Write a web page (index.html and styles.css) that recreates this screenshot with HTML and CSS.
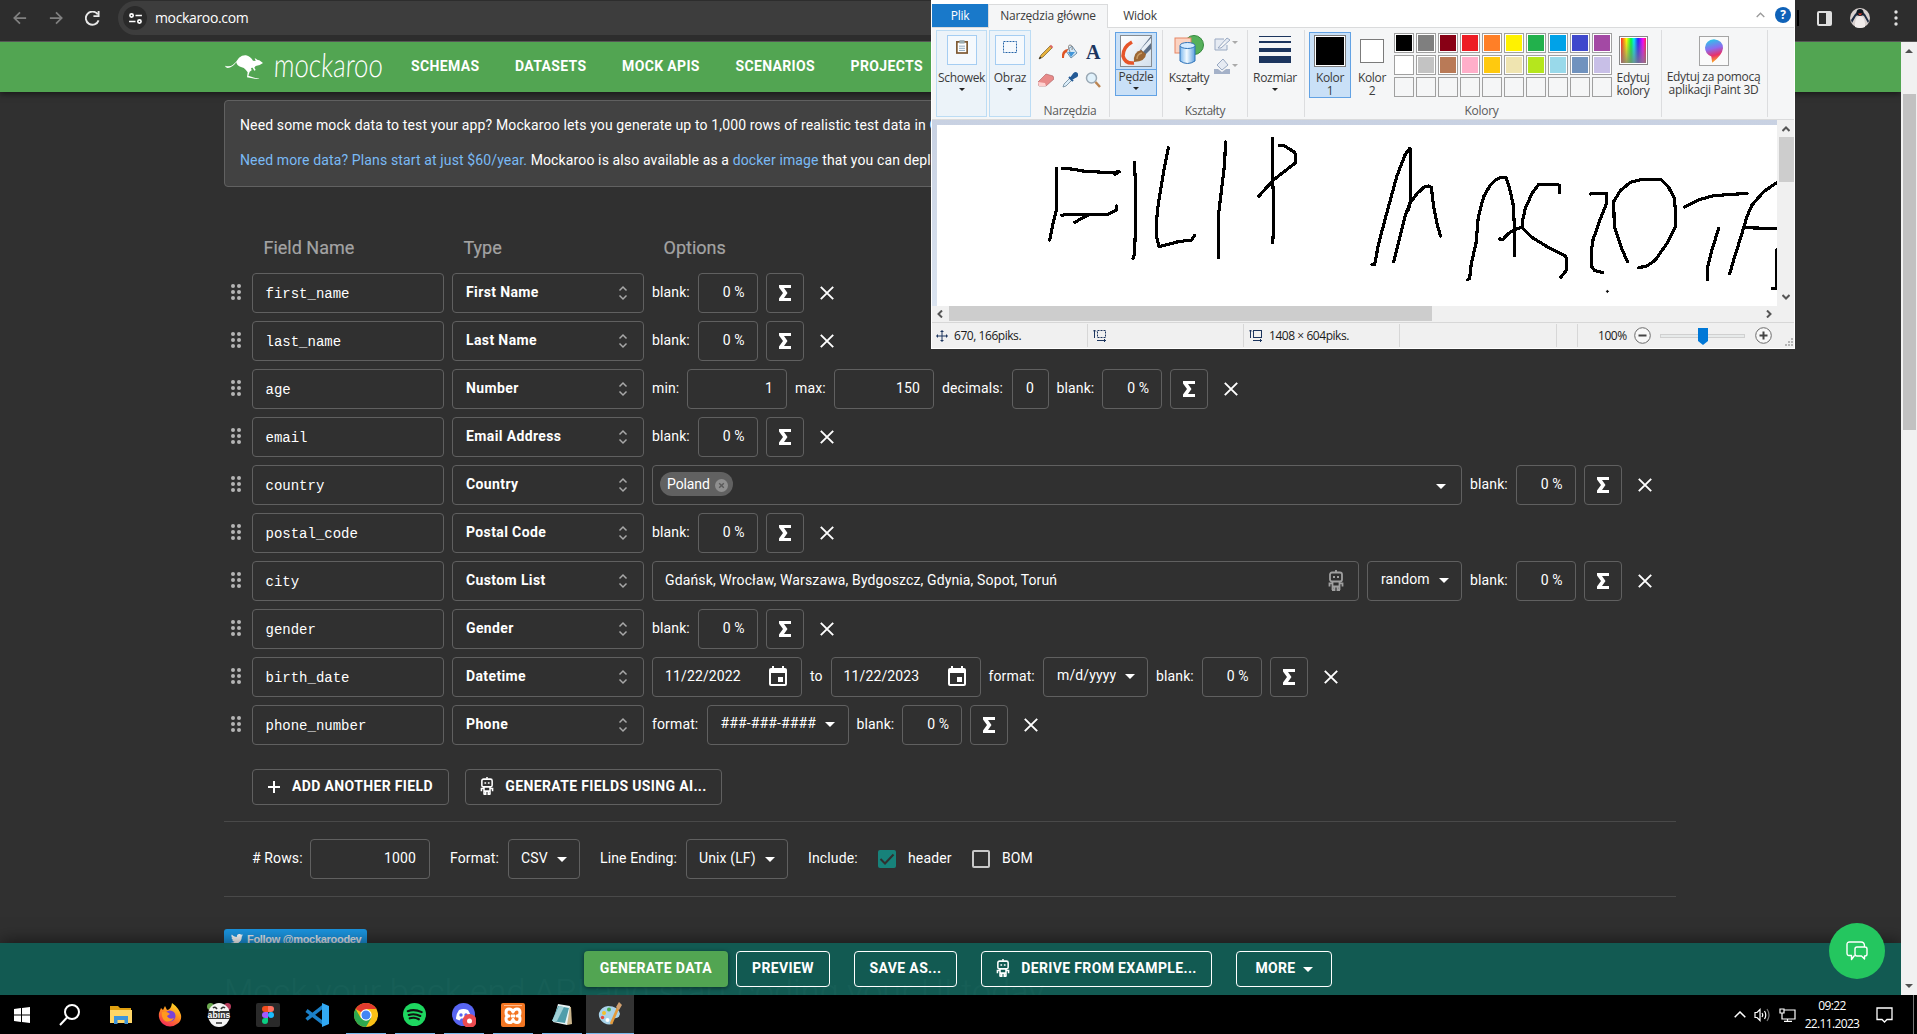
FILE: index.html
```html
<!DOCTYPE html>
<html lang="pl">
<head>
<meta charset="utf-8">
<title>Mockaroo</title>
<link rel="stylesheet" href="styles.css">
</head>
<body>
<svg class="defs" width="0" height="0">
  <symbol id="drag" viewBox="0 0 12 18"><g fill="#b5b5b5"><circle cx="3" cy="3" r="2"/><circle cx="9" cy="3" r="2"/><circle cx="3" cy="9" r="2"/><circle cx="9" cy="9" r="2"/><circle cx="3" cy="15" r="2"/><circle cx="9" cy="15" r="2"/></g></symbol>
  <symbol id="updown" viewBox="0 0 10 16"><path d="M1.5 5.5 5 2l3.500 3.500M1.500 10.500 5 14l3.500-3.500" fill="none" stroke="#a8a8a8" stroke-width="1.500"/></symbol>
  <symbol id="sigma" viewBox="0 0 12 16"><path d="M0 0H12V3H5L8.500 8 5 13H12V16H0V13.500L4 8 0 2.500Z" fill="#fff"/></symbol>
  <symbol id="close" viewBox="0 0 14 14"><path d="M.8.8 13.200 13.200M13.200.8.8 13.200" stroke="#fff" stroke-width="1.900"/></symbol>
  <symbol id="caret" viewBox="0 0 10 5"><path d="M0 0H10L5 5Z" fill="currentColor"/></symbol>
  <symbol id="cal" viewBox="0 0 18 20"><path fill-rule="evenodd" fill="#fff" d="M3 0H5V2H13V0H15V2H16Q18 2 18 4V18Q18 20 16 20H2Q0 20 0 18V4Q0 2 2 2H3ZM2 7V18H16V7ZM9 11H14V16H9Z"/></symbol>
  <symbol id="robot" viewBox="0 0 16 21"><g fill="none" stroke="currentColor" stroke-width="1.800"><rect x="2" y="2.500" width="12" height="9" rx="2"/><path d="M8 0V2M4.500 11.500V20M11.500 11.500V20M4.500 16.500H11.500M4 13.300H1.500V16.500M12 13.300H14.500V16.500M4 20H6.500V17M12 20H9.500V17"/></g><path d="M5 6H7V8H5ZM9 6H11V8H9Z" fill="currentColor"/></symbol>
</svg>
<div class="screen">
  <header class="browser">
    <svg class="nav-ic" viewBox="0 0 16 16" width="14" height="14"><path d="M15 8H2M8 1.500 1.500 8 8 14.500" fill="none" stroke="#808080" stroke-width="2"/></svg>
    <svg class="nav-ic" viewBox="0 0 16 16" width="14" height="14"><path d="M1 8H14M8 1.500 14.500 8 8 14.500" fill="none" stroke="#808080" stroke-width="2"/></svg>
    <svg class="nav-ic" viewBox="0 0 16 16" width="15" height="15"><path d="M13.500 3.500A7 7 0 1 0 14.500 10M14.500 0V5.500H9" fill="none" stroke="#e8e8e8" stroke-width="2"/></svg>
    <div class="omnibox">
      <span class="site"><svg viewBox="0 0 14 12" width="13" height="11"><g fill="none" stroke="#fff" stroke-width="1.800"><circle cx="2.700" cy="2.700" r="1.800"/><path d="M7 2.700H14M0 9.300H7"/><circle cx="11.300" cy="9.300" r="1.800"/></g></svg></span>
      <span class="url">mockaroo.com</span>
    </div>
    <div class="browser-right">
      <i class="sep"></i>
      <svg viewBox="0 0 15 15" width="15" height="15"><rect x="1" y="1" width="13" height="13" rx="1" fill="none" stroke="#e0e0e0" stroke-width="2"/><path d="M9 1H14V14H9Z" fill="#e0e0e0"/></svg>
      <svg class="avatar" viewBox="0 0 20 20" width="20" height="20"><circle cx="10" cy="10" r="10" fill="#d8cfcd"/><path d="M2 15 6 8 10 6 14 8 18 15 19 13 15 6 12 3H8L5 6 1 12Z" fill="#1c2a40"/><path d="M5 15Q6 8 10 8T15 15V19Q10 21 5 19Z" fill="#f0ebea"/><circle cx="10" cy="4.500" r="3.500" fill="#101820"/><path d="M8 5.500H12.500L10 7.500Z" fill="#e13c2c"/></svg>
      <svg viewBox="0 0 4 16" width="4" height="16"><g fill="#e0e0e0"><circle cx="2" cy="2" r="1.700"/><circle cx="2" cy="8" r="1.700"/><circle cx="2" cy="14" r="1.700"/></g></svg>
    </div>
  </header>

  <div class="viewport">
    <div class="page">
      <nav class="topnav">
        <svg class="roo" viewBox="0 0 114 72" width="38" height="24"><path fill="#fff" d="M0 32Q14 37 24 29T42 8Q52 0 63 1Q77 5 84 17L92 18 89 9 98 15 103 16 114 24 104 30 92 33 88 38 92 45 88 47 83 38 78 39 80 46 74 50 70 62 88 68 103 71 101 73 82 70 66 67 68 52 62 44Q58 38 48 36Q36 33 34 22Q22 38 8 39Q1 37 0 32Z"/></svg>
        <span class="brand">mockaroo</span>
        <div class="links"><a>SCHEMAS</a><a>DATASETS</a><a>MOCK APIS</a><a>SCENARIOS</a><a>PROJECTS</a></div>
      </nav>
      <main class="content">
        <section class="info">
          <p>Need some mock data to test your app? Mockaroo lets you generate up to 1,000 rows of realistic test data in CSV, JSON, SQL, and Excel formats.</p>
          <p><a>Need more data? Plans start at just $60/year.</a> Mockaroo is also available as a <a>docker image</a> that you can deploy in your own private cloud.</p>
        </section>
        <div class="heads"><span>Field Name</span><span>Type</span><span>Options</span></div>
        <div class="rows">
          <div class="row"><svg class="drag"><use href="#drag"/></svg><div class="box name">first_name</div><div class="box type">First Name<svg><use href="#updown"/></svg></div><label class="lb">blank:</label><div class="box pct">0 %</div><div class="box sig"><svg><use href="#sigma"/></svg></div><svg class="x"><use href="#close"/></svg></div>
          <div class="row"><svg class="drag"><use href="#drag"/></svg><div class="box name">last_name</div><div class="box type">Last Name<svg><use href="#updown"/></svg></div><label class="lb">blank:</label><div class="box pct">0 %</div><div class="box sig"><svg><use href="#sigma"/></svg></div><svg class="x"><use href="#close"/></svg></div>
          <div class="row"><svg class="drag"><use href="#drag"/></svg><div class="box name">age</div><div class="box type">Number<svg><use href="#updown"/></svg></div><label class="min">min:</label><div class="box num">1</div><label class="max">max:</label><div class="box num">150</div><label class="dec">decimals:</label><div class="box dig">0</div><label class="lb">blank:</label><div class="box pct">0 %</div><div class="box sig"><svg><use href="#sigma"/></svg></div><svg class="x"><use href="#close"/></svg></div>
          <div class="row"><svg class="drag"><use href="#drag"/></svg><div class="box name">email</div><div class="box type">Email Address<svg><use href="#updown"/></svg></div><label class="lb">blank:</label><div class="box pct">0 %</div><div class="box sig"><svg><use href="#sigma"/></svg></div><svg class="x"><use href="#close"/></svg></div>
          <div class="row"><svg class="drag"><use href="#drag"/></svg><div class="box name">country</div><div class="box type">Country<svg><use href="#updown"/></svg></div><div class="box country"><span class="chip">Poland<svg viewBox="0 0 14 14" width="13" height="13"><circle cx="7" cy="7" r="7" fill="#8f8f8f"/><path d="M4.500 4.500 9.500 9.500M9.500 4.500 4.500 9.500" stroke="#5a5a5a" stroke-width="1.500"/></svg></span><svg class="caret"><use href="#caret"/></svg></div><label class="lb">blank:</label><div class="box pct">0 %</div><div class="box sig"><svg><use href="#sigma"/></svg></div><svg class="x"><use href="#close"/></svg></div>
          <div class="row"><svg class="drag"><use href="#drag"/></svg><div class="box name">postal_code</div><div class="box type">Postal Code<svg><use href="#updown"/></svg></div><label class="lb">blank:</label><div class="box pct">0 %</div><div class="box sig"><svg><use href="#sigma"/></svg></div><svg class="x"><use href="#close"/></svg></div>
          <div class="row"><svg class="drag"><use href="#drag"/></svg><div class="box name">city</div><div class="box type">Custom List<svg><use href="#updown"/></svg></div><div class="box city">Gdańsk, Wrocław, Warszawa, Bydgoszcz, Gdynia, Sopot, Toruń<svg class="bot"><use href="#robot"/></svg></div><div class="box sel random">random<svg class="caret"><use href="#caret"/></svg></div><label class="lb">blank:</label><div class="box pct">0 %</div><div class="box sig"><svg><use href="#sigma"/></svg></div><svg class="x"><use href="#close"/></svg></div>
          <div class="row"><svg class="drag"><use href="#drag"/></svg><div class="box name">gender</div><div class="box type">Gender<svg><use href="#updown"/></svg></div><label class="lb">blank:</label><div class="box pct">0 %</div><div class="box sig"><svg><use href="#sigma"/></svg></div><svg class="x"><use href="#close"/></svg></div>
          <div class="row"><svg class="drag"><use href="#drag"/></svg><div class="box name">birth_date</div><div class="box type">Datetime<svg><use href="#updown"/></svg></div><div class="box date">11/22/2022<svg><use href="#cal"/></svg></div><label class="to">to</label><div class="box date">11/22/2023<svg><use href="#cal"/></svg></div><label class="fmt">format:</label><div class="box sel mdy">m/d/yyyy<svg class="caret"><use href="#caret"/></svg></div><label class="lb">blank:</label><div class="box pct">0 %</div><div class="box sig"><svg><use href="#sigma"/></svg></div><svg class="x"><use href="#close"/></svg></div>
          <div class="row"><svg class="drag"><use href="#drag"/></svg><div class="box name">phone_number</div><div class="box type">Phone<svg><use href="#updown"/></svg></div><label class="fmt">format:</label><div class="box sel hash">###-###-####<svg class="caret"><use href="#caret"/></svg></div><label class="lb">blank:</label><div class="box pct">0 %</div><div class="box sig"><svg><use href="#sigma"/></svg></div><svg class="x"><use href="#close"/></svg></div>
        </div>
        <div class="actions">
          <div class="btn add"><svg viewBox="0 0 12 12" width="12" height="12"><path d="M6 0V12M0 6H12" stroke="#fff" stroke-width="2"/></svg><span>ADD ANOTHER FIELD</span></div>
          <div class="btn gen"><svg class="bot2"><use href="#robot"/></svg><span>GENERATE FIELDS USING AI...</span></div>
        </div>
        <div class="settings">
          <label class="s1"># Rows:</label><div class="box nrows">1000</div>
          <label class="s2">Format:</label><div class="box sel csv">CSV<svg class="caret"><use href="#caret"/></svg></div>
          <label class="s3">Line Ending:</label><div class="box sel unix">Unix (LF)<svg class="caret"><use href="#caret"/></svg></div>
          <label class="s4">Include:</label>
          <svg class="check" viewBox="0 0 18 18" width="18" height="18"><rect width="18" height="18" rx="2" fill="#17827a"/><path d="M2.500 9 7 13.500 15.500 4.500" fill="none" stroke="#303030" stroke-width="2"/></svg><label class="s5">header</label>
          <svg class="check" viewBox="0 0 18 18" width="18" height="18"><rect x="1" y="1" width="16" height="16" rx="1" fill="none" stroke="#c8c8c8" stroke-width="2"/></svg><label>BOM</label>
        </div>
        <div class="tweet"><svg viewBox="0 0 24 20" width="12" height="10"><path fill="#fff" d="M24 2.400c-.9.400-1.800.7-2.800.8 1-.6 1.800-1.600 2.200-2.700-1 .6-2 1-3.100 1.200a4.900 4.900 0 0 0-8.400 4.500C7.800 6 4.100 4 1.700 1a4.900 4.900 0 0 0 1.500 6.600c-.8 0-1.600-.2-2.200-.6 0 2.400 1.700 4.400 3.900 4.900-.7.200-1.500.2-2.200.1.600 2 2.400 3.400 4.600 3.400A9.900 9.900 0 0 1 0 17.500 14 14 0 0 0 21.500 5c1-.7 1.800-1.600 2.500-2.600z"/></svg><span>Follow @mockaroodev</span></div>
        <h2 class="below">Mock your back end API and start coding your UI today.</h2>
      </main>
      <footer class="bar">
        <div class="btn primary">GENERATE DATA</div><div class="btn preview">PREVIEW</div><div class="btn save">SAVE AS...</div><div class="btn derive"><svg class="bot2"><use href="#robot"/></svg><span>DERIVE FROM EXAMPLE...</span></div><div class="btn more">MORE<svg class="caret"><use href="#caret"/></svg></div>
      </footer>
      <div class="chat"><svg viewBox="0 0 22 20" width="22" height="20"><g fill="none" stroke="#fff" stroke-width="1.400" stroke-linejoin="round"><path d="M8.500 14.500 5.500 18.500V14.500H3Q1 14.500 1 12V3.500Q1 1 3.500 1H15Q18.500 1 18.500 5V6M11 6H19Q21 6 21 8V13Q21 15 19 15H18.500V18L15.500 15H11Q9 15 9 13V8Q9 6 11 6Z"/></g></svg></div>
    </div>
    <div class="scrollbar"><i class="up"></i><i class="thumb"></i><i class="down"></i></div>
  </div>

  <footer class="taskbar">
    <div class="t start"><svg viewBox="0 0 16 16" width="16" height="16"><path fill="#fff" d="M0 2 7 1V7.500H0ZM8 .9 16 0V7.500H8ZM0 8.500H7V15L0 14ZM8 8.500H16V16L8 15.100Z"/></svg></div>
    <div class="t search"><svg viewBox="0 0 22 22" width="22" height="22"><circle cx="13" cy="8" r="7" fill="none" stroke="#fff" stroke-width="2"/><path d="M8 13.500 1 21" stroke="#fff" stroke-width="2"/></svg></div>
    <div class="t"><svg viewBox="0 0 24 20" width="24" height="20"><path fill="#e0a010" d="M1 1H9L11 3H22V8H1Z"/><path fill="#ffd667" d="M1 5H23V18H1Z"/><path fill="#3e95db" d="M5 19V11H19V19H15.500V15H8.500V19Z"/></svg></div>
    <div class="t"><svg viewBox="0 0 24 24" width="24" height="24"><defs><linearGradient id="ff" x1=".8" y1="0" x2=".3" y2="1"><stop offset="0" stop-color="#ffe226"/><stop offset=".5" stop-color="#ff8a1f"/><stop offset="1" stop-color="#f5285a"/></linearGradient></defs><path fill="url(#ff)" d="M14 0Q21 5 23 12Q24 18 19 21Q12 26 5 21Q0 17 1 10L3 5 5 7 7 3 9 7Q13 7 14 0Z"/><circle cx="12" cy="13" r="5.500" fill="#7a42d8"/><path fill="#ff9a1e" d="M4 9Q9 8 12 11L9 13Q11 17 16 15Q13 20 7 18Q3 15 4 9Z"/></svg></div>
    <div class="t"><svg viewBox="0 0 24 24" width="24" height="24"><circle cx="3.500" cy="3.500" r="3.500" fill="#6aa84f"/><circle cx="20.500" cy="3.500" r="3.500" fill="#b73c5c"/><ellipse cx="12" cy="12" rx="11" ry="12" fill="#f4f4f4"/><path d="M1 8H23V16H1Z" fill="#333"/><path d="M6 5Q8 3 10 6M14 6Q16 3 18 5M9 20H15" stroke="#333" stroke-width="1.600" fill="none"/><text x="12" y="14.500" text-anchor="middle" font-size="8.500" font-weight="700" font-family="Liberation Sans, sans-serif" fill="#fff">abins</text></svg></div>
    <div class="t"><svg viewBox="0 0 24 24" width="24" height="24"><rect width="24" height="24" rx="2" fill="#2a2a2a"/><path fill="#f24e1e" d="M12 3H9A3 3 0 0 0 9 9H12Z"/><path fill="#ff7262" d="M12 3H15A3 3 0 0 1 15 9H12Z"/><path fill="#a259ff" d="M12 9H9A3 3 0 0 0 9 15H12Z"/><circle cx="15" cy="12" r="3" fill="#1abcfe"/><path fill="#0acf83" d="M12 15H9A3 3 0 1 0 12 18Z"/></svg></div>
    <div class="t"><svg viewBox="0 0 24 24" width="24" height="24"><path fill="none" stroke="#1b80c8" stroke-width="3.500" d="M1.500 7.500 18 20M1.500 16.500 18 3.500"/><path fill="#32a9f3" d="M17 0 24 3V21L17 24Z"/></svg></div>
    <div class="t run"><svg viewBox="0 0 24 24" width="24" height="24"><circle cx="12" cy="12" r="12" fill="#fbc116"/><path fill="#e33b2e" d="M12 12 1.600 6A12 12 0 0 1 22.400 6H12Z"/><path fill="#2da94f" d="M12 12 6.800 15 1.600 6A12 12 0 0 0 12 24L17.200 15Z"/><circle cx="12" cy="12" r="5.700" fill="#fff"/><circle cx="12" cy="12" r="4.500" fill="#4285f4"/></svg></div>
    <div class="t run"><svg viewBox="0 0 24 24" width="23" height="23"><circle cx="12" cy="12" r="12" fill="#1ed760"/><path fill="none" stroke="#111" stroke-width="2.200" stroke-linecap="round" d="M5 8.500Q12 6 19.500 9.500M6 12.500Q12 10.500 18 13.500M7 16Q12 14.500 16.500 17"/></svg></div>
    <div class="t run"><svg viewBox="0 0 24 24" width="24" height="24"><circle cx="11.500" cy="11.500" r="11.500" fill="#5865f2"/><path fill="#fff" d="M7 7Q11.500 5 16 7Q19 11 19 16L15.500 17.500 14 15.500H9L7.500 17.500 4 16Q4 11 7 7Z"/><circle cx="9" cy="12" r="1.700" fill="#5865f2"/><circle cx="14" cy="12" r="1.700" fill="#5865f2"/><circle cx="17.500" cy="18" r="7" fill="#ed4b50"/><circle cx="17.500" cy="18" r="2.500" fill="#fff"/></svg></div>
    <div class="t run"><svg viewBox="0 0 24 24" width="24" height="24"><rect width="24" height="24" rx="2" fill="#f37623"/><path d="M3 2.500H21" stroke="#ffb98a"/><path fill="none" stroke="#fff" stroke-width="3" stroke-linejoin="round" d="M12 9Q11 6 8 6T5 9.500T8 13Q5 13 5 16T8 19.500T12 16.500Q13 19.500 16 19.500T19 16T16 13Q19 13 19 9.500T16 6T12 9ZM10 13H14"/></svg></div>
    <div class="t run"><svg viewBox="0 0 24 24" width="24" height="24"><path fill="#c9b48b" d="M8 2 21 4 22 21 17 22Z"/><path fill="#e8f4f5" d="M8 1 20 3 17 22 3 19Z"/><path fill="#4f9daa" d="M8 3 19 5 15 20 2 18Z"/><path fill="#9fd0d6" d="M9 3 14 4 7 18 2 18Z"/></svg></div>
    <div class="t active"><svg viewBox="0 0 24 24" width="24" height="24"><path fill="#a8d3ea" d="M10 4Q20 4 22 12Q21 17 16 16Q13 18 15 21Q12 24 6 21Q0 17 1 11Q3 5 10 4Z"/><circle cx="6" cy="11" r="2" fill="#f2c12e"/><circle cx="11" cy="7.500" r="2" fill="#4cae4f"/><circle cx="4.500" cy="15.500" r="1.700" fill="#e6493d"/><circle cx="9.500" cy="18" r="2" fill="#fff"/><path stroke="#e39a3b" stroke-width="2.600" d="M13 22 20 6"/><path fill="#d0a070" d="M18 5 21 0 24 3 21 8Z"/></svg></div>
    <div class="tray">
      <svg viewBox="0 0 12 7" width="12" height="7"><path d="M.7 6.300 6 1 11.300 6.300" fill="none" stroke="#fff" stroke-width="1.500"/></svg>
      <svg viewBox="0 0 17 14" width="17" height="14"><g fill="none" stroke="#fff" stroke-width="1.200"><path d="M1 4.500H3L6 1.500V12.500L3 9.500H1ZM8 5Q9.500 7 8 9M10.500 3Q13 7 10.500 11"/><path d="M13 1Q17 7 13 13" stroke="#777"/></g></svg>
      <svg viewBox="0 0 17 14" width="17" height="14"><g fill="none" stroke="#fff" stroke-width="1.200"><path d="M5 2H16V11H3V7M8.500 11V13.500M5 13.400H13M1 1H5V5H1ZM3 5V8"/></g></svg>
      <div class="clock"><span>09:22</span><span>22.11.2023</span></div>
      <svg viewBox="0 0 17 16" width="17" height="16"><path d="M1 1H16V12.500H11L8.500 15 6 12.500H1Z" fill="none" stroke="#fff" stroke-width="1.300"/></svg>
      <i class="peek"></i>
    </div>
  </footer>

  <section class="paint">
    <div class="tabs"><span class="file">Plik</span><span class="home">Narzędzia główne</span><span class="view">Widok</span>
      <svg class="chev" viewBox="0 0 9 6" width="9" height="6"><path d="M.7 5 4.500 1.200 8.300 5" fill="none" stroke="#9a9a9a" stroke-width="1.300"/></svg><span class="help">?</span></div>
    <div class="ribbon">
      <div class="grp clip"><div class="icbox"><svg viewBox="0 0 14 16" width="12" height="14"><rect x="0" y="1" width="14" height="15" fill="#7f5b35"/><rect x="2" y="3" width="10" height="11" fill="#fff"/><path d="M4 0H10V4H4Z" fill="#9bacb0"/><path d="M3.500 7H10.500M3.500 9.500H10.500M3.500 12H10.500" stroke="#7c9bb5"/></svg></div><b>Schowek</b><svg class="dn"><use href="#caret"/></svg></div>
      <div class="grp clip image"><div class="icbox"><svg viewBox="0 0 14 12" width="14" height="12"><rect x=".5" y=".5" width="13" height="11" fill="none" stroke="#2464a8" stroke-dasharray="2 1"/></svg></div><b>Obraz</b><svg class="dn"><use href="#caret"/></svg></div>
      <div class="grp tools"><div class="toolgrid">
        <svg viewBox="0 0 16 16" width="16" height="16"><path d="M1 15 3 11 12 2 14 4 5 13Z" fill="#e7b13b" stroke="#735b2c" stroke-width=".7"/><path d="M11.500 2 13 .8 15.200 3 14 4.500Z" fill="#dc6663"/><path d="M1 15 2 12.500 3.500 14Z" fill="#222"/></svg>
        <svg viewBox="0 0 16 16" width="16" height="16"><path d="M4 7 10 2 15 9 9 14Z" fill="#d3e7f5" stroke="#6d90ab"/><path d="M6 8 13 8 9 13Z" fill="#4295d8"/><path d="M0 14Q-1 6 6 5L5 8Q2 9 2 14Z" fill="#df5525"/><path d="M8 8Q5 1 8 1T10 6" fill="none" stroke="#888"/></svg>
        <span class="A">A</span>
        <svg viewBox="0 0 16 14" width="16" height="14"><path d="M0 9 8 1 15 3 16 6 8 13 1 13Z" fill="#e88a89" stroke="#a95e60" stroke-width=".6"/><path d="M0 9 7 10 8 13 1 13Z" fill="#ffd0cf"/></svg>
        <svg viewBox="0 0 16 16" width="16" height="16"><path d="M1 15 2 12 8 6 10 8 4 14Z" fill="#dceefa" stroke="#69869b" stroke-width=".8"/><path d="M7 5 11 9M9 6 12 2Q14 0 15 2T13 5L10 7Z" stroke="#255b96" stroke-width="2" fill="#255b96"/></svg>
        <svg viewBox="0 0 16 16" width="16" height="16"><circle cx="6.500" cy="6" r="5" fill="#e0f1fb" stroke="#9aa9b5" stroke-width="1.500"/><path d="M10.500 10 15 15" stroke="#bc8552" stroke-width="2.500"/></svg>
      </div><em>Narzędzia</em></div>
      <div class="grp brush"><div class="brushbtn"><svg viewBox="0 0 32 32" width="32" height="32"><defs><linearGradient id="bg" x2="1" y2="1"><stop offset="0" stop-color="#fff"/><stop offset="1" stop-color="#d3e0ec"/></linearGradient></defs><rect x=".5" y=".5" width="31" height="31" fill="url(#bg)" stroke="#858b91"/><path d="M31 1V14L25 20 20 15Z" fill="#5d7088"/><path d="M21 14 31 3V8L23 17Z" fill="#e8eff6"/><path d="M12 7Q3 12 3 21Q5 29 14 28" fill="none" stroke="#e6552a" stroke-width="3.500"/><path d="M14 27Q13 17 21 15L26 19Q26 26 14 27Z" fill="#9c6734"/><path d="M17 24Q17 19 22 18" stroke="#c99a62" fill="none" stroke-width="1.500"/></svg><b>Pędzle</b><svg class="dn"><use href="#caret"/></svg></div></div>
      <div class="grp shapes"><div class="shaperow"><div class="shape"><svg viewBox="0 0 30 30" width="30" height="30"><defs><linearGradient id="cy"><stop offset="0" stop-color="#7bb8ef"/><stop offset=".45" stop-color="#f2faff"/><stop offset="1" stop-color="#5c9fe0"/></linearGradient></defs><circle cx="20" cy="10" r="9.500" fill="#55b05b" stroke="#34893c"/><rect x="1" y="3" width="16" height="15" fill="#fbd3c2" stroke="#e88664"/><path d="M6 11V26Q13.500 31 21 26V11Z" fill="url(#cy)" stroke="#2f73b8"/><ellipse cx="13.500" cy="10.500" rx="7.500" ry="3" fill="#d4eaff" stroke="#2f73b8"/></svg><b>Kształty</b><svg class="dn"><use href="#caret"/></svg></div><div class="two"><svg viewBox="0 0 24 14" width="24" height="14"><path d="M10 2H1V13H13V8M4 11 13 1 16 3 7 11Z" fill="#e6ebf3" stroke="#99a9c2"/><path d="M18 4H24L21 7Z" fill="#aaa"/></svg><svg viewBox="0 0 24 16" width="24" height="16"><path d="M3 7 9 1 14 7 8 12Z" fill="#e6ebf3" stroke="#99a9c2"/><path d="M0 11H4L8 14 12 11H16V16H0Z" fill="#a4b1c8"/><path d="M18 6H24L21 9Z" fill="#aaa"/></svg></div></div><em>Kształty</em></div>
      <div class="grp size"><svg viewBox="0 0 32 27" width="32" height="27"><path fill="#1c355e" d="M0 0H32V1H0ZM0 5H32V7H0ZM0 12H32V16H0ZM0 20H32V27H0Z"/></svg><b>Rozmiar</b><svg class="dn"><use href="#caret"/></svg></div>
      <div class="grp colors"><div class="colorrow"><div class="c1"><i></i><b>Kolor<br>1</b></div><div class="c2"><i></i><b>Kolor<br>2</b></div>
        <div class="swatches">
          <i style="background-color:#000"></i><i style="background-color:#7f7f7f"></i><i style="background-color:#880015"></i><i style="background-color:#ed1c24"></i><i style="background-color:#ff7f27"></i><i style="background-color:#fff200"></i><i style="background-color:#22b14c"></i><i style="background-color:#00a2e8"></i><i style="background-color:#3f48cc"></i><i style="background-color:#a349a4"></i>
          <i style="background-color:#fff"></i><i style="background-color:#c3c3c3"></i><i style="background-color:#b97a57"></i><i style="background-color:#ffaec9"></i><i style="background-color:#ffc90e"></i><i style="background-color:#efe4b0"></i><i style="background-color:#b5e61d"></i><i style="background-color:#99d9ea"></i><i style="background-color:#7092be"></i><i style="background-color:#c8bfe7"></i>
          <i class="e"></i><i class="e"></i><i class="e"></i><i class="e"></i><i class="e"></i><i class="e"></i><i class="e"></i><i class="e"></i><i class="e"></i><i class="e"></i>
        </div>
        <div class="edit"><i></i><b>Edytuj<br>kolory</b></div></div><em>Kolory</em></div>
      <div class="grp p3d"><div class="p3box"><svg viewBox="0 0 20 26" width="18" height="24"><defs><linearGradient id="p3" x1=".3" y1="0" x2=".5" y2="1"><stop offset="0" stop-color="#28c8e8"/><stop offset=".4" stop-color="#8a6df0"/><stop offset=".7" stop-color="#e8306a"/><stop offset="1" stop-color="#ffb61e"/></linearGradient></defs><path fill="url(#p3)" d="M10 0Q20 1 20 10Q19 18 8 26L7 19Q0 16 0 9Q1 1 10 0Z"/></svg></div><b>Edytuj za pomocą<br>aplikacji Paint 3D</b></div>
    </div>
    <div class="work">
      <div class="stage"><div class="canvas"><svg width="840" height="180" viewBox="0 0 840 180"><g transform="translate(-12 -125) scale(.33333)" fill="none" stroke="#000" stroke-width="9.500" stroke-linecap="round" stroke-linejoin="round" shape-rendering="crispEdges"><path d="M395 505V628L382 680 374 720M413 506 440 507 480 514 560 518 583 515 570 523M410 646 430 643H548L574 631V618M449 667 489 645M628 488 631 540V700L628 765 624 776M730 443 715 520 700 610 695 660V710L702 740 760 725 800 720 809 706M902 426 898 500 881 640V772M1043 415V540L1046 600V685L1043 728M1063 436H1076L1106 455 1112 463V488L1045 540 1001 589M1341 794H1349L1360 735 1385 640 1415 530 1440 465 1454 445 1457 450V600L1450 630M1406 785 1420 730 1440 650 1454 610 1475 582 1496 562 1511 558 1519 562 1526 620 1536 670 1546 708"/><path transform="translate(1476)" d="M152 839 158 835 163 790 177 730 184 650 200 590 220 555 235 541 250 533 267 532 275 555 288 610 293 690V767M248 717 258 718 275 700 290 690 315 682M428 577V557L421 553H365L345 580 325 625 317 660V685L345 712 390 740 445 768 449 775V810L431 832M520 582 545 580H569V610L545 670 528 720 524 745V800L533 812 557 818M631 785 612 740 592 680 590 605 610 572 640 547 670 539H733L755 562 772 595 776 640V680L750 730 715 780 690 798 665 803M803 621 850 598 890 587 990 580M905 685 885 750 872 800V839M938 821 950 780 975 700 990 650 1005 615 1040 575 1085 544M982 683 1085 686M1079 750V866H1066"/><path stroke-width="3" transform="translate(1476)" d="M568 874H575M571 871V878"/></g></svg></div></div>
      <div class="vs"><svg viewBox="0 0 8 6" width="8" height="6"><path d="M.5 5 4 1.500 7.500 5" fill="none" stroke="#555" stroke-width="2"/></svg><i></i><svg viewBox="0 0 8 6" width="8" height="6"><path d="M.5 1 4 4.500 7.500 1" fill="none" stroke="#555" stroke-width="2"/></svg></div>
    </div>
    <div class="hs"><svg viewBox="0 0 6 8" width="6" height="8"><path d="M5 .5 1.500 4 5 7.500" fill="none" stroke="#555" stroke-width="2"/></svg><i></i><svg class="r" viewBox="0 0 6 8" width="6" height="8"><path d="M1 .5 4.500 4 1 7.500" fill="none" stroke="#555" stroke-width="2"/></svg></div>
    <div class="status">
      <div class="st a"><svg viewBox="0 0 12 12" width="12" height="12"><path d="M6 0V12M0 6H12M4.500 1.500H7.500M4.500 10.500H7.500M1.500 4.500V7.500M10.500 4.500V7.500" stroke="#1c355e"/></svg><span>670, 166piks.</span></div>
      <div class="st b"><svg viewBox="0 0 14 13" width="14" height="13"><g fill="none" stroke="#1c355e"><rect x="4.500" y="1.500" width="8" height="7" stroke-dasharray="2 1"/><path d="M1.500 1V9M0 2.500 1.500 1 3 2.500M4 11.500H13M11 10 12.500 11.500 11 13"/></g></svg></div>
      <div class="st c"><svg viewBox="0 0 14 13" width="14" height="13"><g fill="none" stroke="#1c355e"><rect x="4.500" y="1.500" width="8" height="7"/><path d="M1.500 1V9M0 2.500 1.500 1 3 2.500M4 11.500H13M11 10 12.500 11.500 11 13"/></g></svg><span>1408 × 604piks.</span></div>
      <div class="st d"></div><div class="st e2"></div>
      <div class="zoom"><span>100%</span><svg viewBox="0 0 17 17" width="17" height="17"><circle cx="8.500" cy="8.500" r="7.800" fill="#f8f8f8" stroke="#6b6b6b"/><path d="M4.500 8.500H12.500" stroke="#444" stroke-width="2"/></svg><div class="track"><svg viewBox="0 0 10 17" width="10" height="17"><path d="M0 0H10V13L5 17 0 13Z" fill="#0078d7"/></svg></div><svg viewBox="0 0 17 17" width="17" height="17"><circle cx="8.500" cy="8.500" r="7.800" fill="#f8f8f8" stroke="#6b6b6b"/><path d="M4.500 8.500H12.500M8.500 4.500V12.500" stroke="#444" stroke-width="2"/></svg><svg class="grip" viewBox="0 0 8 8" width="8" height="8"><path fill="#b5b5b5" d="M6 0H8V2H6ZM6 3H8V5H6ZM3 3H5V5H3ZM6 6H8V8H6ZM3 6H5V8H3ZM0 6H2V8H0Z"/></svg></div>
    </div>
  </section>
</div>
</body>
</html>
```
FILE: styles.css
```css
* { box-sizing: border-box; }
body { margin: 0; overflow: hidden; background: #303030; color: #fff; font: 14px/20px Roboto, "Liberation Sans", sans-serif; letter-spacing: .13px; }
svg { display: block; flex: none; }
.defs { position: absolute; }
.screen { position: relative; display: flex; flex-direction: column; width: 1917px; height: 1034px; }

/* browser toolbar */
.browser { display: flex; align-items: flex-start; height: 42px; background: #2d2d2d; border-bottom: 1px solid #555; padding: 1px 0 0 13px; }
.nav-ic { margin: 10px 22px 0 0; }
.omnibox { display: flex; align-items: center; width: 1600px; height: 34px; margin-left: -4px; border-radius: 17px; background: #3d3d3d; padding-left: 5px; }
.site { display: flex; align-items: center; justify-content: center; width: 24px; height: 24px; border-radius: 50%; background: #2a2a2a; }
.url { margin-left: 8px; font: 14px/20px "Open Sans", sans-serif; letter-spacing: -.35px; }
.browser-right { display: flex; align-items: center; height: 34px; margin-left: auto; padding-right: 19px; }
.browser-right .sep { width: 2px; height: 16px; background: #000; margin-right: 18px; }
.avatar { margin: 0 24px 0 18px; }

.viewport { display: flex; height: 953px; }
.page { position: relative; width: 1901px; height: 953px; overflow: hidden; background: #303030; }
.topnav { position: relative; display: flex; align-items: center; height: 50px; padding-left: 225px; background: #52a552; box-shadow: 0 2px 6px rgba(0,0,0,.5); }
.brand { width: 110px; margin-left: 11px; font: 300 33px/44px Lato, sans-serif; letter-spacing: 0; transform: scaleX(.78) skewX(-4deg); transform-origin: 0 50%; margin-top: -7px; }
.links { display: flex; gap: 35.600px; margin-left: 27px; font-weight: 700; letter-spacing: .35px; margin-top: -3px; }
.content { padding: 8px 0 0 224px; }
.info { width: 1452px; height: 87px; padding: 14px 15px; background: #424242; border: 1px solid #616161; border-radius: 4px; overflow: hidden; }
.info p { margin: 0 0 15px; white-space: nowrap; }
.info a { color: #7abaf5; }
.heads { display: flex; margin-top: 49px; padding-left: 39.500px; font-size: 18px; line-height: 24px; letter-spacing: 0; color: #a3a3a3; -webkit-text-stroke: .2px #a3a3a3; }
.heads span { width: 200px; }

/* field rows */
.rows { display: flex; flex-direction: column; gap: 8px; margin-top: 13px; }
.row { display: flex; align-items: center; gap: 8px; height: 40px; padding-left: 6px; }
.box { display: flex; align-items: center; height: 40px; border: 1px solid #606060; border-radius: 4px; padding: 0 12px 2px; white-space: nowrap; flex: none; }
label { white-space: nowrap; flex: none; padding-bottom: 2px; }
.drag { width: 12px; height: 18px; margin-right: 2px; margin-top: -2px; }
.name { width: 192px; font: 14px/20px "Liberation Mono", monospace; letter-spacing: 0; padding-left: 12.500px; padding-top: 1px; padding-bottom: 0; }
.type { width: 192px; font-weight: 700; letter-spacing: .38px; justify-content: space-between; padding-left: 13px; padding-right: 15px; }
.type svg { width: 10px; height: 16px; margin-top: 2px; }
.lb { width: 37.700px; }
.min { width: 27px; }
.max { width: 31px; }
.dec { width: 61.500px; }
.to { width: 12.500px; }
.fmt { width: 46.500px; }
.pct { width: 60px; justify-content: flex-end; }
.num { width: 100px; justify-content: flex-end; padding-right: 13px; }
.dig { width: 37px; justify-content: center; padding: 0 0 2px; }
.sig { width: 38px; justify-content: center; padding: 0 0 1px; }
.sig svg { width: 12px; height: 16px; }
.x { width: 14px; height: 14px; margin-left: 8px; margin-top: -1px; }
.caret { width: 10px; height: 5px; margin-left: 9px; margin-top: 3px; }
.country { width: 810px; padding: 0 15px 0 7px; justify-content: space-between; }
.chip { display: flex; align-items: center; width: 73px; height: 24px; padding-left: 7px; border-radius: 12px; background: #616161; line-height: 22px; letter-spacing: -.1px; margin-top: -2px; }
.chip svg { margin: 2px 0 0 5px; }
.city { width: 707px; justify-content: space-between; padding-right: 14px; }
.bot { width: 16px; height: 21px; color: #a0a0a0; }
.random { width: 95px; }
.date { width: 150px; justify-content: space-between; padding-right: 14px; }
.date svg { width: 18px; height: 20px; }
.mdy { width: 105px; }
.hash { width: 142px; }
.sel { padding-bottom: 4px; padding-left: 13px; }

.btn { display: flex; align-items: center; justify-content: center; height: 36px; border: 1px solid #606060; border-radius: 4px; font-weight: 700; letter-spacing: .36px; white-space: nowrap; flex: none; padding-bottom: 2px; }
.bot2 { width: 14px; height: 18px; margin-right: 11px; }
.actions { display: flex; gap: 16px; padding: 24px 0 16px 28px; border-bottom: 1px solid #494949; width: 1452px; }
.add { width: 197px; }
.add svg { margin-right: 12px; margin-top: 2px; }
.gen { width: 257px; }
.settings { display: flex; align-items: center; width: 1452px; height: 75px; padding-left: 28px; border-bottom: 1px solid #494949; }
.settings .sel { padding-bottom: 2px; padding-left: 12px; }
.s1 { width: 58px; }
.nrows { width: 120px; margin-right: 20px; justify-content: flex-end; padding-right: 13px; }
.s2 { width: 58px; }
.csv { width: 72px; margin-right: 20px; }
.s3 { width: 86px; }
.unix { width: 102px; margin-right: 20px; }
.s4 { width: 70px; }
.s5 { width: 64px; }
.check { margin-right: 12px; }
.tweet { display: flex; align-items: center; width: 143px; height: 20px; margin-top: 32px; padding-left: 7px; border-radius: 3px; background: #1b95e0; font: 700 11px/20px "Liberation Sans", sans-serif; color: #e6e9ec; }
.tweet span { margin-left: 4px; letter-spacing: -.3px; white-space: nowrap; }
.below { margin: 22px 0 0; font-size: 34px; line-height: 40px; font-weight: 300; color: #fff; white-space: nowrap; }
.bar { position: absolute; left: 0; bottom: 0; display: flex; width: 1901px; height: 52px; padding: 8px 0 0 584px; background: rgba(17,91,83,.98); box-shadow: 0 -2px 16px rgba(0,0,0,.5); }
.bar .btn { border-color: #fff; }
.bar .primary { width: 144px; background: #52a552; border: 0; box-shadow: 0 1px 4px rgba(0,0,0,.5); margin-right: 8px; }
.preview { width: 94px; margin-right: 24px; }
.save { width: 103px; margin-right: 24px; }
.derive { width: 231px; margin-right: 24px; }
.more { width: 96px; }
.bar .caret { margin-left: 7px; }
.chat { position: absolute; left: 1829px; top: 881px; display: flex; align-items: center; justify-content: center; width: 56px; height: 56px; border-radius: 50%; background: #24c65f; }
.scrollbar { display: flex; flex-direction: column; align-items: center; width: 16px; background: #f1f1f1; }
.scrollbar i { border: 4px solid transparent; }
.scrollbar .up { margin-top: 3px; border-bottom-color: #505050; }
.scrollbar .thumb { width: 13px; height: 336px; margin-top: 41px; background: #c1c1c1; border: 0; }
.scrollbar .down { margin-top: auto; margin-bottom: 3px; border-top-color: #505050; }

/* taskbar */
.taskbar { display: flex; height: 39px; background: #000; }
.t { display: flex; align-items: center; justify-content: center; width: 49px; height: 39px; }
.start { width: 44px; }
.search { width: 52px; }
.run { background: linear-gradient(#76b9ed,#76b9ed) center bottom / 40px 1px no-repeat; }
.active { width: 48px; background: #333; border-bottom: 1px solid #76b9ed; }
.tray { display: flex; align-items: center; margin-left: auto; }
.tray > svg { margin-right: 8px; }
.clock { display: flex; flex-direction: column; align-items: center; width: 56px; margin-right: 16px; font: 12px/18px "Open Sans", sans-serif; letter-spacing: -.65px; }
.peek { width: 1px; height: 39px; background: #777; margin: 0 3px 0 12px; }

/* drawing program window */
.paint { position: absolute; left: 931px; top: 0; width: 864px; height: 349px; padding: 4px 1px 1px; background: #fff; color: #3b3b3b; font: 12px/13px "Open Sans", sans-serif; letter-spacing: -.3px; overflow: hidden; }
.paint b { font-weight: 400; white-space: nowrap; text-align: center; color: #3b3b3b; }
.tabs { display: flex; height: 24px; border-bottom: 1px solid #dadbdc; line-height: 24px; }
.tabs span { text-align: center; }
.file { width: 56px; height: 23px; background: #1979ca; color: #fff; }
.home { width: 120px; height: 24px; background: #f5f6f7; border: 1px solid #dadbdc; border-bottom: 0; line-height: 22px; letter-spacing: -.2px; }
.view { width: 64px; }
.chev { margin: 8px 10px 0 auto; }
.tabs .help { width: 16px; height: 16px; margin: 3px 3px 0 0; border-radius: 50%; background: #0f62b8; color: #fff; font-weight: 700; line-height: 16px; }
.ribbon { display: flex; height: 92px; background: #f5f6f7; border-bottom: 1px solid #dadbdc; padding: 2px 0 2px 4px; }
.grp { position: relative; display: flex; flex-direction: column; align-items: center; height: 87px; border-right: 1px solid #dcdddf; flex: none; }
.grp em { margin-top: auto; font-style: normal; line-height: 13px; color: #5a5a5a; }
.dn { width: 6px; height: 3px; color: #222; margin-top: 4px; }
.clip { width: 51px; border: 1px solid #bcdcf4; background: #ecf3f9; margin-right: 2px; padding-top: 4px; }
.clip.image { width: 42px; margin-right: 0; }
.icbox { display: flex; align-items: center; justify-content: center; width: 30px; height: 30px; margin-bottom: 6px; border: 1px solid #a5cdf2; background: #f5f9fd; flex: none; padding-bottom: 6px; }
.tools { width: 79px; }
.toolgrid { display: grid; grid-template-columns: repeat(3, 23.500px); grid-auto-rows: 28px; place-items: center; padding-top: 8px; margin-right: 1px; }
.A { font: 700 20px/20px "Liberation Serif", serif; color: #1c355e; }
.brush { width: 53px; padding-top: 2px; }
.brushbtn { display: flex; flex-direction: column; align-items: center; width: 42px; height: 64px; border: 1px solid #62a2e4; background: linear-gradient(#62a2e4,#62a2e4) 0 36px / 42px 1px no-repeat #c9e0f7; padding-top: 2px; }
.shape b { margin-top: 6px; }
.brushbtn b { margin-top: 3px; }
.brushbtn .dn { margin-top: 4px; }
.shapes { width: 85px; }
.shaperow { display: flex; width: 100%; padding: 5px 0 0 7px; gap: 6px; }
.shape { display: flex; flex-direction: column; align-items: center; width: 38px; }
.two { display: flex; flex-direction: column; gap: 7px; padding-top: 2px; }
.size { width: 57px; padding: 6px 2px 0 0; }
.size b { margin-top: 8px; }
.colors { width: 357px; }
.colors em { margin-right: 3px; }
.colorrow { display: flex; width: 356px; padding: 2px 0 0 4px; }
.c1, .c2, .edit { display: flex; flex-direction: column; align-items: center; width: 42px; height: 66px; }
.c1 { border: 1px solid #62a2e4; background: #c9e0f7; padding-top: 2px; }
.c1 i { width: 32px; height: 32px; border: 1px solid #7b7b7b; box-shadow: inset 0 0 0 1px #fff; background: #000; margin-bottom: 4px; }
.c2 { padding-top: 7px; }
.c2 i { width: 24px; height: 24px; border: 1px solid #7b7b7b; background: #fff; margin-bottom: 8px; }
.swatches { display: grid; grid-template-columns: repeat(10, 20px); grid-auto-rows: 20px; gap: 2px; margin: 1px 0 0 1px; }
.swatches i { border: 1px solid #a0a0a0; background-clip: content-box; padding: 1px; box-shadow: inset 0 0 0 1px #fff; }
.swatches .e { background: #f5f6f7; box-shadow: none; }
.edit { padding-top: 4px; }
.edit i { width: 29px; height: 29px; margin-bottom: 6px; border: 1px solid #888; padding: 1px; background: linear-gradient(transparent,rgba(128,128,128,.8)) content-box, linear-gradient(90deg,#f22,#ff0 22%,#0f3 40%,#0ef 52%,#22f 68%,#f0f 88%,#f24) content-box, #fff; }
.p3d { width: 106px; padding: 6px 2px 0 0; }
.p3box { display: flex; align-items: center; justify-content: center; width: 30px; height: 30px; margin-bottom: 4px; border: 1px solid #a5a5a5; background: #fafafa; flex: none; }
.work { display: flex; height: 186px; }
.stage { width: 846px; padding: 5px 1px 0 5px; background: linear-gradient(#c8d1e2,#dbe4f0); border-right: 1px solid #f0f0f0; }
.canvas { width: 840px; height: 181px; background: #fff; }
.vs { display: flex; flex-direction: column; align-items: center; width: 16px; background: #f0f0f0; padding: 6px 0 6px; }
.vs i { width: 15px; height: 45px; background: #cdcdcd; margin: 5px 0 auto; }
.hs { display: flex; align-items: center; height: 16px; background: #f0f0f0; padding: 0 0 1px 5px; }
.hs i { width: 483px; height: 15px; margin-left: 6px; background: #cdcdcd; }
.hs .r { margin: 0 22px 0 auto; }
.status { display: flex; height: 26px; background: #f0f0f0; border-top: 1px solid #d7d7d7; color: #1a1a1a; letter-spacing: -.45px; }
.st { display: flex; align-items: center; margin-top: 1px; height: 23px; border-right: 1px solid #d7d7d7; padding-left: 4px; gap: 6px; }
.a { width: 156px; }
.b, .c { width: 156px; padding-left: 5px; }
.d { width: 157px; }
.e2 { width: 21px; }
.zoom { display: flex; align-items: center; flex: 1; padding-left: 20px; }
.zoom span { margin-right: 7px; }
.track { width: 85px; height: 4px; margin: 0 10px 0 9px; border: 1px solid #d0d0d0; background: #e7eaea; }
.track svg { margin: -7px 0 0 37px; }
.grip { margin: 12px 0 0 13px; }
```
